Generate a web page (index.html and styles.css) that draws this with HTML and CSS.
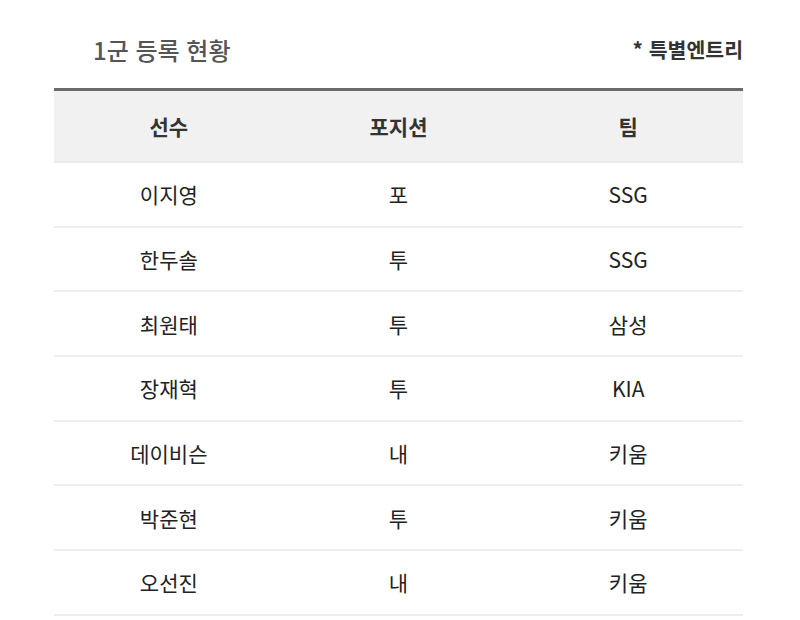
FILE: index.html
```html
<!DOCTYPE html>
<html lang="ko">
<head>
<meta charset="utf-8">
<link rel="stylesheet" href="styles.css">
</head>
<body>
<div class="wrap">
  <div class="head">
    <h2 class="title">1군 등록 현황</h2>
    <span class="note">* 특별엔트리</span>
  </div>
  <table class="roster">
    <thead>
      <tr><th>선수</th><th>포지션</th><th>팀</th></tr>
    </thead>
    <tbody>
      <tr><td>이지영</td><td>포</td><td>SSG</td></tr>
      <tr><td>한두솔</td><td>투</td><td>SSG</td></tr>
      <tr><td>최원태</td><td>투</td><td>삼성</td></tr>
      <tr><td>장재혁</td><td>투</td><td>KIA</td></tr>
      <tr><td>데이비슨</td><td>내</td><td>키움</td></tr>
      <tr><td>박준현</td><td>투</td><td>키움</td></tr>
      <tr><td>오선진</td><td>내</td><td>키움</td></tr>
    </tbody>
  </table>
</div>
</body>
</html>
```
FILE: styles.css
```css
html, body {
  margin: 0;
  padding: 0;
  background: #ffffff;
  font-family: "Noto Sans CJK KR", "Noto Sans", sans-serif;
}
.wrap {
  width: 689px;
  margin-left: 54px;
}
.head {
  display: flex;
  justify-content: space-between;
  align-items: center;
  height: 88px;
  padding-top: 20px;
  box-sizing: border-box;
}
.title {
  margin: 0 0 10px 39px;
  font-size: 24px;
  font-weight: 500;
  color: #555555;
}
.note {
  margin-bottom: 10px;
  font-size: 20.5px;
  font-weight: 700;
  color: #333333;
}
.roster {
  width: 100%;
  border-collapse: collapse;
  table-layout: fixed;
  border-top: 3px solid #6b6b6b;
}
.roster th {
  height: 70px;
  padding: 0;
  background: #f1f1f1;
  font-size: 21px;
  font-weight: 700;
  color: #333333;
  border-bottom: 2px solid #ebebeb;
}
.roster td {
  height: 62.7px;
  padding: 0;
  text-align: center;
  font-size: 21px;
  font-weight: 400;
  color: #222222;
  border-bottom: 2px solid #eeeeee;
}
```
